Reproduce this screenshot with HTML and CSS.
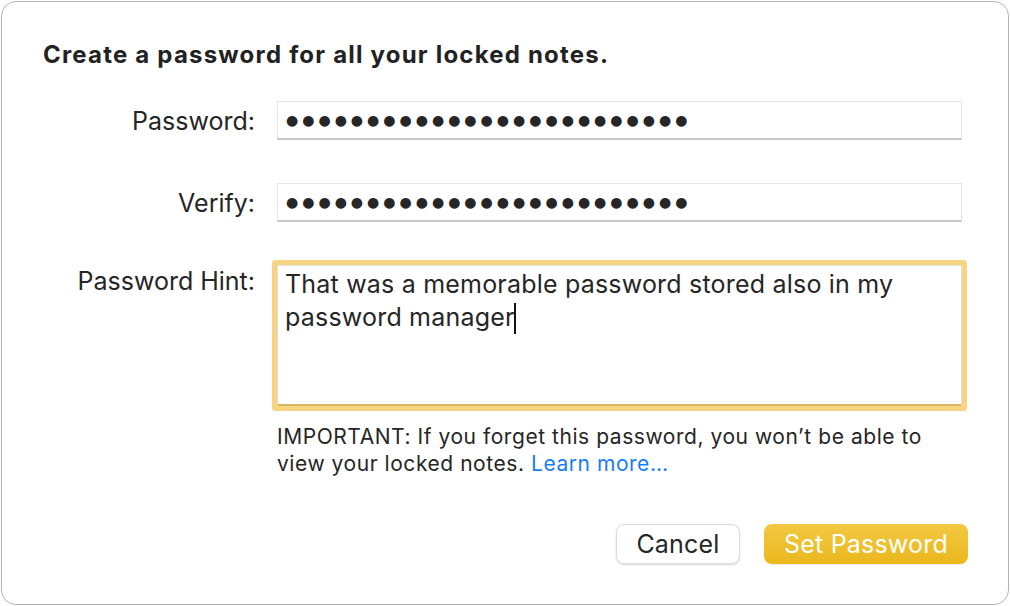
FILE: index.html
```html
<!DOCTYPE html>
<html>
<head>
<meta charset="utf-8">
<link rel="stylesheet" href="styles.css">
</head>
<body>
<div class="window">
  <h1 class="title">Create a password for all your locked notes.</h1>
  <div class="form">
    <label class="label">Password:</label>
    <div class="field"><span class="dots">●●●●●●●●●●●●●●●●●●●●●●●●●</span></div>
    <label class="label">Verify:</label>
    <div class="field"><span class="dots">●●●●●●●●●●●●●●●●●●●●●●●●●</span></div>
    <label class="label label-hint">Password Hint:</label>
    <div class="hint-group">
      <div class="hint">That was a memorable password stored also in my password manager<span class="caret"></span></div>
      <p class="note"><span>IMPORTANT: If you forget this password, you won’t be able to</span><br><span>view your locked notes.</span> <a class="link" href="#">Learn more…</a></p>
    </div>
  </div>
  <div class="buttons">
    <button class="btn btn-cancel">Cancel</button>
    <button class="btn btn-primary">Set Password</button>
  </div>
</div>
</body>
</html>
```
FILE: styles.css
```css
html, body {
  margin: 0;
  padding: 0;
  background: #ffffff;
}
body {
  font-family: Inter, "Noto Sans", "Liberation Sans", sans-serif;
  color: #262626;
}
.window {
  box-sizing: border-box;
  margin: 1px 0 0 1px;
  width: 1008px;
  height: 604px;
  border: 1px solid #b4b4b4;
  border-radius: 15px;
  background: #fff;
  padding: 0 40px 0 41px;
  display: flex;
  flex-direction: column;
}
.title {
  margin: 38px 0 0 0;
  font-size: 24px;
  line-height: 30px;
  font-weight: 700;
  color: #222;
  letter-spacing: 1.2px;
}
.form {
  margin-top: 31px;
  display: grid;
  grid-template-columns: 212px 685px;
  column-gap: 22px;
  row-gap: 43px;
  align-items: start;
}
.label {
  text-align: right;
  font-size: 25px;
  line-height: 37px;
  padding-top: 2px;
  color: #262626;
}
.label-hint {
  line-height: 32px;
  padding-top: 0;
}
.field {
  box-sizing: border-box;
  height: 39px;
  border: 1px solid #e4e4e4;
  border-bottom: 2px solid #c8c8c8;
  background: #fff;
  padding-left: 8px;
  display: flex;
  align-items: center;
}
.dots {
  font-family: "DejaVu Sans", sans-serif;
  font-size: 14px;
  letter-spacing: 4px;
  color: #262626;
}
.hint-group {
  display: flex;
  flex-direction: column;
  gap: 17px;
}
.hint {
  box-sizing: border-box;
  height: 141px;
  border: 1px solid #e0e0e0;
  border-bottom: 2px solid #d9b864;
  box-shadow: 0 0 0 5px #f6d482;
  border-radius: 1px;
  padding: 2px 8px 0 7px;
  font-size: 25px;
  line-height: 33px;
  letter-spacing: 0.2px;
  color: #262626;
}
.caret {
  display: inline-block;
  width: 2px;
  height: 31px;
  background: #111;
  vertical-align: -8px;
  margin-left: -1px;
}
.note {
  margin: 0;
  font-size: 21px;
  line-height: 27px;
  letter-spacing: 0.55px;
  color: #262626;
}
.link {
  color: #1a7cf5;
  text-decoration: none;
}
.buttons {
  margin-top: 47px;
  display: flex;
  justify-content: flex-end;
  gap: 24px;
}
.btn {
  box-sizing: border-box;
  height: 40px;
  border-radius: 8px;
  font-family: Inter, "Noto Sans", sans-serif;
  font-size: 25px;
  letter-spacing: 0.2px;
  padding: 0;
}
.btn-cancel {
  width: 124px;
  background: #fff;
  color: #262626;
  border: 1px solid #dcdcdc;
  box-shadow: 0 1px 2px rgba(0,0,0,0.15);
}
.btn-primary {
  width: 204px;
  border: none;
  color: #fff;
  background: linear-gradient(#f2c842, #ebb71c);
  box-shadow: 0 1px 1px rgba(0,0,0,0.08);
}
```
